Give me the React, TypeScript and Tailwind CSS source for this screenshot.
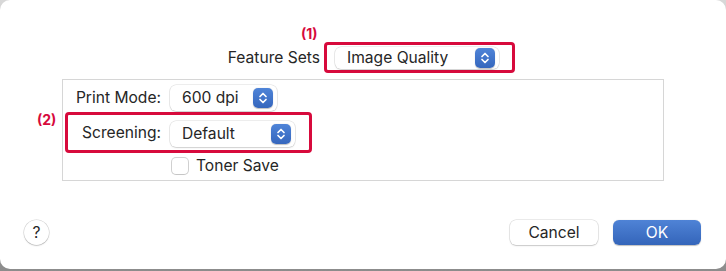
const FONT = { fontFamily: 'Inter, "Liberation Sans", Arial, sans-serif' };

const Stepper = () => (
  <span className="flex h-[20px] w-[20px] items-center justify-center rounded-[5px] bg-gradient-to-b from-[#4f84d8] to-[#3566bd] shadow-[0_0.5px_1px_rgba(0,0,0,0.25)]">
    <svg width="20" height="20" viewBox="0 0 20 20" fill="none">
      <path d="M7 8.5 L10 5.5 L13 8.5" stroke="white" strokeWidth="1.7" strokeLinecap="round" strokeLinejoin="round" />
      <path d="M7 11.5 L10 14.5 L13 11.5" stroke="white" strokeWidth="1.7" strokeLinecap="round" strokeLinejoin="round" />
    </svg>
  </span>
);

const Popup = ({ label, width, height }: { label: string; width: string; height: string }) => (
  <div
    className={`flex items-center justify-between rounded-[6px] bg-white pl-[12px] pr-[4px] shadow-[0_0_0_0.5px_rgba(0,0,0,0.14),0_1px_1.5px_rgba(0,0,0,0.12)] ${width} ${height}`}
  >
    <span className="text-[15.6px] leading-none text-[#262626]">{label}</span>
    <Stepper />
  </div>
);

const App = () => {
  return (
    <div style={FONT} className="h-[271px] w-[726px] bg-gradient-to-b from-[#d8d8d8] to-[#8c8c8c] pb-[2px]">
      <div className="flex h-[269px] flex-col rounded-[10px] bg-white">
        {/* Feature Sets */}
        <div className="mt-[42px] flex items-center">
          <span className="w-[321px] pr-[1px] text-right text-[15.6px] leading-none text-[#262626]">Feature Sets</span>
          <div className="relative ml-[3px] flex h-[31px] w-[191px] items-center rounded-[4px] border-[3px] border-[#d70a3c] pl-[8px]">
            <span className="absolute left-[-26px] top-[-18px] text-[14px] font-bold leading-[14px] text-[#d70a3c]">(1)</span>
            <Popup label="Image Quality" width="w-[164px]" height="h-[22px]" />
          </div>
        </div>

        {/* Group box */}
        <div className="ml-[62px] mt-[6px] h-[102px] w-[602px] border border-[#d6d6d6]">
          <div className="mt-[5px] flex h-[26px] items-center">
            <span className="w-[98px] text-right text-[15.6px] leading-none text-[#262626]">Print Mode:</span>
            <div className="ml-[9px]">
              <Popup label="600 dpi" width="w-[107px]" height="h-[26px]" />
            </div>
          </div>

          <div className="relative ml-[2px] mt-[1px] flex h-[41px] w-[247px] items-center rounded-[4px] border-[3px] border-[#d70a3c]">
            <span className="absolute left-[-31px] top-[-2px] text-[14px] font-bold leading-[14px] text-[#d70a3c]">(2)</span>
            <span className="w-[93px] text-right text-[15.6px] leading-none text-[#262626]">Screening:</span>
            <div className="ml-[9px] mt-[2px]">
              <Popup label="Default" width="w-[125px]" height="h-[26px]" />
            </div>
          </div>

          <div className="ml-[109px] mt-[5px] flex items-center">
            <span className="h-[16px] w-[16px] rounded-[4px] bg-white shadow-[0_0_0_1px_rgba(0,0,0,0.18),0_1px_1px_rgba(0,0,0,0.06)]" />
            <span className="ml-[8px] text-[15.6px] leading-none text-[#262626]">Toner Save</span>
          </div>
        </div>

        {/* Buttons */}
        <div className="mb-[24px] mt-auto flex items-center pl-[24px] pr-[25px]">
          <span className="flex h-[25px] w-[25px] items-center justify-center rounded-full bg-white text-[15.6px] text-[#262626] shadow-[0_0_0_0.5px_rgba(0,0,0,0.18),0_1px_1.5px_rgba(0,0,0,0.15)]">
            ?
          </span>
          <button className="ml-auto h-[25px] w-[88px] rounded-[6px] bg-white text-[15.6px] leading-none text-[#262626] shadow-[0_0_0_0.5px_rgba(0,0,0,0.16),0_1px_1.5px_rgba(0,0,0,0.15)]">
            Cancel
          </button>
          <button className="ml-[15px] h-[25px] w-[88px] rounded-[6px] bg-gradient-to-b from-[#4f83d6] to-[#3465ba] text-[15.6px] leading-none text-white shadow-[0_0.5px_1px_rgba(0,0,0,0.25)]">
            OK
          </button>
        </div>
      </div>
    </div>
  );
};

export default App;
